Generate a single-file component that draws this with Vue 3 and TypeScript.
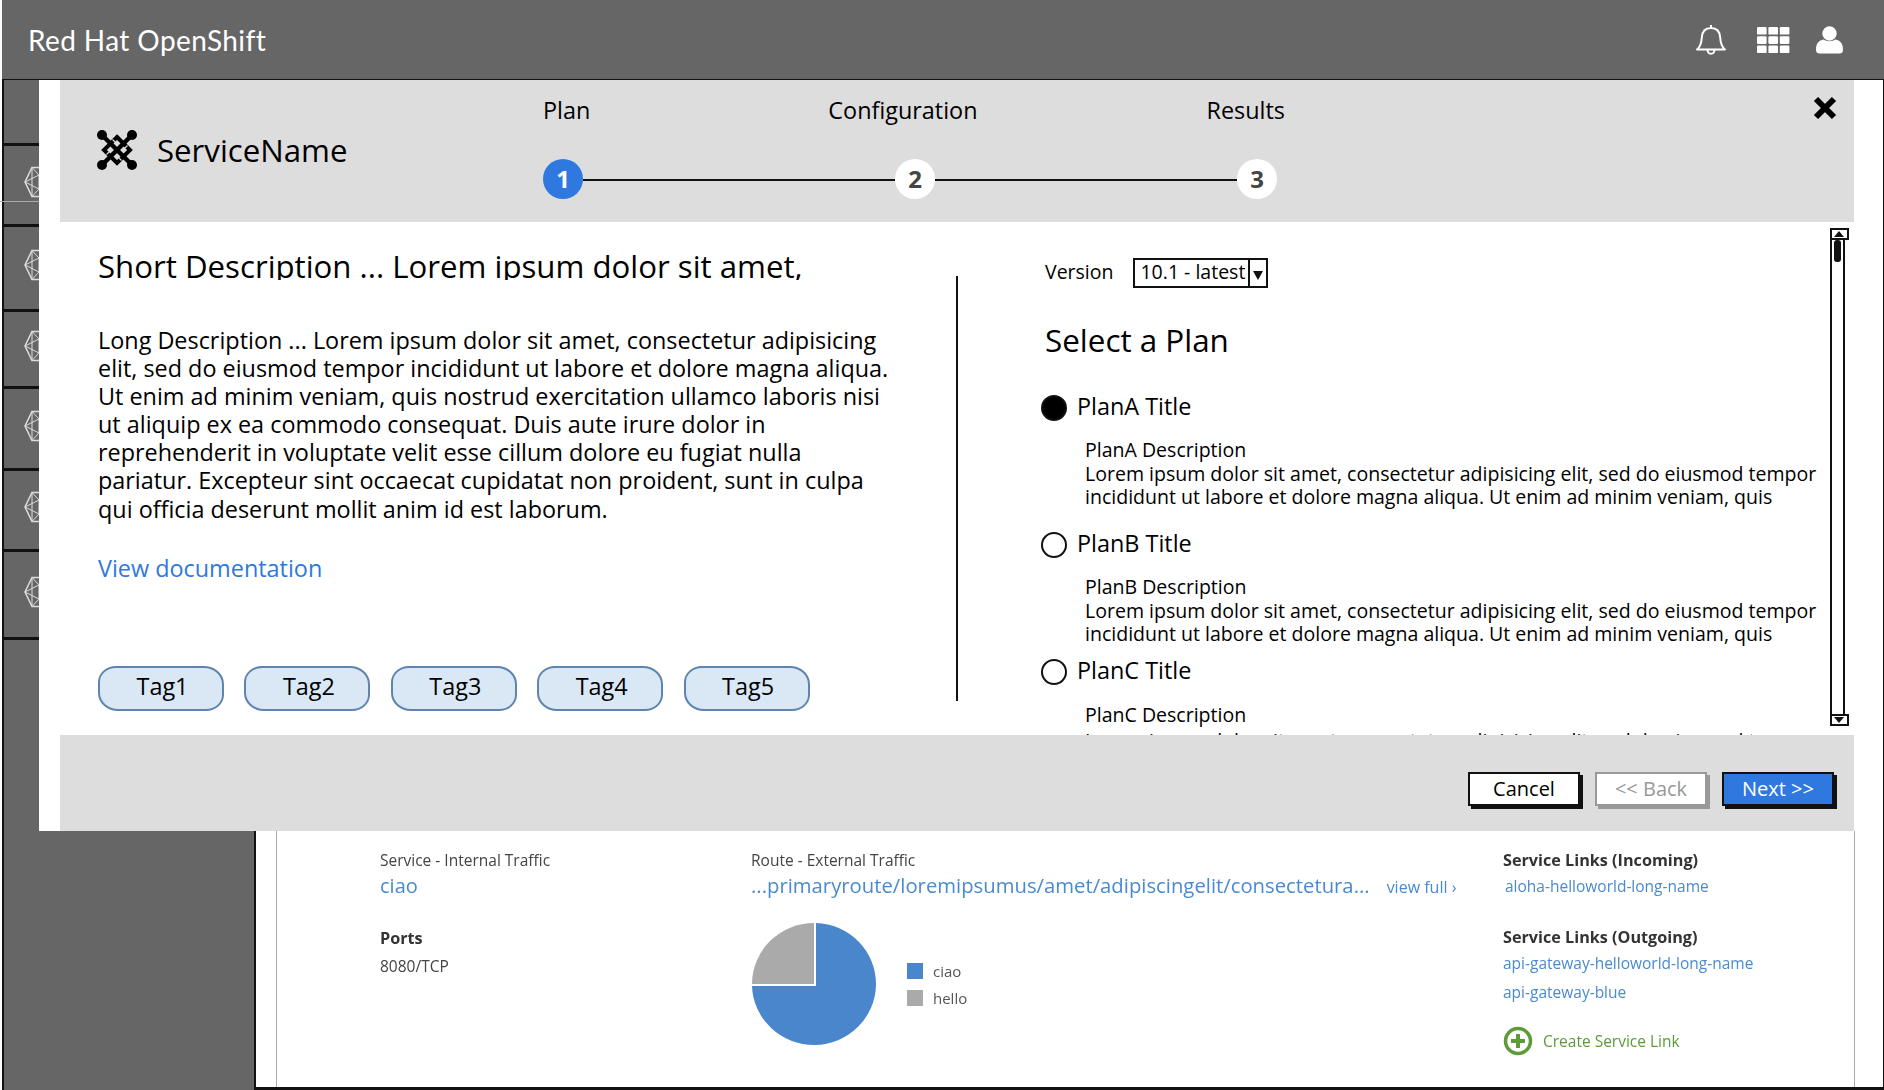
<template>
  <div class="page">
    <header class="topbar">
      <span class="brand">Red Hat OpenShift</span>
      <div class="top-icons">
        <svg width="32" height="34" viewBox="0 0 32 34" fill="none" stroke="#fff" stroke-width="2">
          <path d="M2 26.5c4-3 4.500-7 4.800-12C7.200 8.500 10.500 5 16 5s8.800 3.500 9.200 9.500c.3 5 .8 9 4.800 12z" stroke-linejoin="round" />
          <path d="M16 5V2M12.500 27c.5 5 6.500 5 7 0" />
        </svg>
        <svg class="grid-icon" width="33" height="26" viewBox="0 0 33 26" fill="#fff">
          <template v-for="y in [0, 9.300, 18.600]" :key="y">
            <rect v-for="x in [0, 11.400, 22.800]" :key="x" :x="x" :y="y" width="9.600" height="7.600" rx="1.200" />
          </template>
        </svg>
        <svg width="27" height="28" viewBox="0 0 27 28" fill="#fff">
          <circle cx="13.500" cy="7.500" r="7.200" />
          <path d="M0 24c0-7 3-9.500 7.500-10.500 3.500 2.300 8.500 2.300 12 0C24 14.500 27 17 27 24c0 2.500-1.500 3.500-3.500 3.500h-20C1.500 27.500 0 26.500 0 24z" />
        </svg>
      </div>
    </header>

    <div class="shell">
      <aside class="sidebar">
        <div v-for="(h, i) in rowHeights" :key="i" class="side-row" :style="{ height: h + 'px' }">
          <svg v-if="i > 0" class="hex" width="30" height="32" viewBox="0 0 30 32" fill="none" stroke="#ddd" stroke-width="1">
            <path d="M8 1.500h14L29 16l-7 14.500H8L1 16z" stroke-width="1.500" />
            <path d="M8 1.500L15 9l7-7.500M1 16l14-7 14 7M1 16l14 7 14-7M8 30.500L15 23l7 7.500M15 9v14M8 1.500V30.500M22 1.500V30.500" />
          </svg>
        </div>
      </aside>

      <main class="main">
        <div class="panel">
          <section class="col">
            <div class="label">Service - Internal Traffic</div>
            <a class="link big">ciao</a>
            <div class="head ports">Ports</div>
            <div class="label port">8080/TCP</div>
          </section>
          <section class="col">
            <div class="label">Route - External Traffic</div>
            <div class="route">
              <a class="link route-link">...primaryroute/loremipsumus/amet/adipiscingelit/consectetura...</a>
              <a class="link view-full">view full ›</a>
            </div>
            <div class="chart">
              <svg width="124" height="122" viewBox="0 0 124 124" preserveAspectRatio="none">
                <path d="M64 64V0A62 62 0 1 1 0 64z" fill="#4a86cc" />
                <path d="M62 62V0A62 62 0 0 0 0 62z" fill="#aaa" />
              </svg>
              <ul class="legend">
                <li><i class="swatch blue"></i>ciao</li>
                <li><i class="swatch gray"></i>hello</li>
              </ul>
            </div>
          </section>
          <section class="col">
            <div class="head">Service Links (Incoming)</div>
            <a class="link small incoming">aloha-helloworld-long-name</a>
            <div class="head outgoing">Service Links (Outgoing)</div>
            <a class="link small out1">api-gateway-helloworld-long-name</a>
            <a class="link small out2">api-gateway-blue</a>
            <div class="create">
              <svg width="30" height="30" viewBox="0 0 30 30" fill="none" stroke="#5d9b38">
                <circle cx="15" cy="15" r="12.500" stroke-width="3.500" />
                <path d="M15 8v14M8 15h14" stroke-width="4" />
              </svg>
              Create Service Link
            </div>
          </section>
        </div>
      </main>
    </div>

    <div class="modal">
      <div class="modal-head">
        <div class="service">
          <svg width="40" height="40" viewBox="0 0 40 40" fill="none" stroke="#000">
            <path d="M5 5l30 30M35 5L5 35" stroke-width="4.500" />
            <path d="M20 7l13 13-13 13L7 20z" stroke-width="4" />
            <path d="M15.500 9.500l4 4M30.500 15.500l-4 4M24.500 30.500l-4-4M9.500 24.500l4-4" stroke="#ddd" stroke-width="1.200" />
            <g fill="#000" stroke="none">
              <circle cx="5" cy="5" r="5" /><circle cx="35" cy="5" r="5" /><circle cx="5" cy="35" r="5" /><circle cx="35" cy="35" r="5" />
            </g>
          </svg>
          <span>ServiceName</span>
        </div>
        <div class="steps">
          <div class="step-labels">
            <span v-for="s in steps" :key="s.n" class="step-label">{{ s.label }}</span>
          </div>
          <div class="track">
            <template v-for="(s, i) in steps" :key="s.n">
              <span class="dot" :class="{ active: i === 0 }">{{ s.n }}</span>
              <span v-if="i < steps.length - 1" class="bar"></span>
            </template>
          </div>
        </div>
        <svg class="close" width="24" height="24" viewBox="0 0 24 24" stroke="#000" stroke-width="6">
          <path d="M3 3l18 18M21 3L3 21" />
        </svg>
      </div>

      <div class="modal-body">
        <div class="left">
          <h1 class="short">Short Description ... Lorem ipsum dolor sit amet,</h1>
          <p class="long">
            <template v-for="l in longLines" :key="l">{{ l }}<br /></template>
          </p>
          <a class="doc">View documentation</a>
          <div class="tags">
            <span v-for="t in tags" :key="t" class="tag">{{ t }}</span>
          </div>
        </div>
        <div class="divider"></div>
        <div class="right">
          <div class="version">
            <span>Version</span>
            <div class="select">
              <span class="select-value">10.1 - latest</span>
              <span class="select-arrow"></span>
            </div>
          </div>
          <h2 class="select-plan">Select a Plan</h2>
          <div v-for="(p, i) in plans" :key="p" class="plan">
            <div class="plan-title">
              <span class="radio" :class="{ on: i === 0 }"></span>
              <span class="plan-name">{{ p }} Title</span>
            </div>
            <div class="plan-desc">
              {{ p }} Description<br />
              Lorem ipsum dolor sit amet, consectetur adipisicing elit, sed do eiusmod tempor<br />
              incididunt ut labore et dolore magna aliqua. Ut enim ad minim veniam, quis
            </div>
          </div>
        </div>
        <div class="scrollbar">
          <span class="arrow up"></span>
          <span class="thumb"></span>
          <span class="arrow down"></span>
        </div>
      </div>

      <div class="modal-foot">
        <button class="btn">Cancel</button>
        <button class="btn disabled">&lt;&lt; Back</button>
        <button class="btn primary">Next &gt;&gt;</button>
      </div>
    </div>
  </div>
</template>

<script setup lang="ts">
const rowHeights: number[] = [66, 81, 85, 77, 82, 81, 88]

const steps = [
  { n: 1, label: "Plan" },
  { n: 2, label: "Configuration" },
  { n: 3, label: "Results" },
]

const longLines: string[] = [
  "Long Description ... Lorem ipsum dolor sit amet, consectetur adipisicing",
  "elit, sed do eiusmod tempor incididunt ut labore et dolore magna aliqua.",
  "Ut enim ad minim veniam, quis nostrud exercitation ullamco laboris nisi",
  "ut aliquip ex ea commodo consequat. Duis aute irure dolor in",
  "reprehenderit in voluptate velit esse cillum dolore eu fugiat nulla",
  "pariatur. Excepteur sint occaecat cupidatat non proident, sunt in culpa",
  "qui officia deserunt mollit anim id est laborum.",
]

const tags: string[] = ["Tag1", "Tag2", "Tag3", "Tag4", "Tag5"]
const plans: string[] = ["PlanA", "PlanB", "PlanC"]
</script>

<style>
html, body {
  margin: 0;
  background: #fff;
}
</style>

<style scoped>
.page {
  position: relative;
  width: 1884px;
  height: 1090px;
  overflow: hidden;
  background: #fff;
  font-family: "Open Sans", "Noto Sans", sans-serif;
  color: #000;
}

.topbar {
  margin-left: 2px;
  height: 79px;
  border-bottom: 1px solid #111;
  background: #666;
  display: flex;
  align-items: center;
  justify-content: space-between;
  padding: 0 41px 0 26px;
}
.brand {
  font-family: Lato, "Open Sans", sans-serif;
  font-size: 28px;
  color: #fff;
  letter-spacing: 0.4px;
}
.top-icons {
  display: flex;
  align-items: center;
  gap: 26px;
}
.grid-icon {
  margin-left: 4px;
}

.shell {
  display: flex;
  height: 1010px;
  margin-left: 2px;
}
.sidebar {
  width: 250px;
  background: #666;
  border-left: 2px solid #111;
  border-right: 2px solid #111;
  flex: none;
}
.side-row {
  position: relative;
  box-sizing: border-box;
  border-bottom: 3px solid #111;
  display: flex;
  align-items: center;
  padding: 0 0 6px 20px;
}
.side-row:first-child::after {
  content: "";
  position: absolute;
  left: -4px;
  top: 121px;
  width: 40px;
  height: 1px;
  background: #aaa;
}
.main {
  flex: 1;
  box-sizing: border-box;
  border-right: 1px solid #111;
  border-bottom: 3px solid #111;
  padding: 0 28px 0 20px;
}
.panel {
  height: 100%;
  box-sizing: border-box;
  border-left: 1px solid #aaa;
  border-right: 1px solid #aaa;
  padding: 770px 0 0 103px;
  display: grid;
  grid-template-columns: 371px 752px 1fr;
  filter: blur(0.35px);
}
.col {
  display: flex;
  flex-direction: column;
  align-items: flex-start;
}
.label {
  font-size: 15.500px;
  line-height: 20px;
  color: #444;
}
.port {
  margin-top: 8px;
}
.head {
  font-size: 16.200px;
  line-height: 20px;
  font-weight: 700;
  color: #333;
}
.ports {
  margin-top: 28px;
}
.link {
  color: #4a8ad0;
}
.big {
  font-size: 20px;
  line-height: 28px;
  margin-top: 2px;
}
.route {
  display: flex;
  align-items: baseline;
  gap: 17px;
  margin-top: 1px;
  line-height: 28px;
  white-space: nowrap;
}
.route-link {
  font-size: 20.300px;
}
.view-full {
  font-size: 16px;
}
.chart {
  display: flex;
  align-items: center;
  gap: 31px;
  margin: 22px 0 0 1px;
}
.legend {
  list-style: none;
  margin: 0;
  padding: 0;
  font-size: 15px;
  color: #555;
}
.legend li {
  display: flex;
  align-items: center;
  gap: 10px;
  height: 27px;
}
.swatch {
  width: 16px;
  height: 16px;
}
.blue {
  background: #4a86cc;
}
.gray {
  background: #aaa;
}
.small {
  font-size: 15.500px;
  line-height: 22px;
}
.incoming {
  margin: 5px 0 0 2px;
}
.outgoing {
  margin-top: 30px;
}
.out1 {
  margin-top: 5px;
}
.out2 {
  margin-top: 7px;
}
.create {
  display: flex;
  align-items: center;
  gap: 10px;
  margin-top: 23px;
  font-size: 15.500px;
  color: #5d9b38;
}

.modal {
  position: absolute;
  left: 39px;
  top: 80px;
  width: 1841px;
  height: 751px;
  box-sizing: border-box;
  background: #fff;
  padding: 0 26px 0 21px;
  display: flex;
  flex-direction: column;
}
.modal-head {
  position: relative;
  flex: none;
  height: 142px;
  background: #ddd;
  display: flex;
}
.service {
  display: flex;
  align-items: center;
  gap: 20px;
  width: 483px;
  padding: 0 0 0 37px;
  box-sizing: border-box;
  height: 120px;
  margin-top: 10px;
  font-size: 31.200px;
}
.steps {
  padding-top: 14px;
}
.step-labels {
  position: relative;
  display: flex;
  height: 33px;
  font-size: 23.400px;
  line-height: 33px;
}
.step-label:nth-child(2) {
  margin-left: 238px;
}
.step-label:nth-child(3) {
  margin-left: 229px;
}
.track {
  display: flex;
  align-items: center;
  margin-top: 32px;
}
.dot {
  width: 40px;
  height: 40px;
  flex: none;
  border-radius: 50%;
  background: #fff;
  color: #444;
  font-size: 24px;
  font-weight: 700;
  line-height: 40px;
  text-align: center;
}
.dot.active {
  background: #2f78e0;
  color: #fff;
}
.bar {
  width: 312px;
  height: 2px;
  margin-top: 2px;
  background: #111;
}
.bar:nth-child(4) {
  width: 302px;
}
.close {
  position: absolute;
  right: 17px;
  top: 16px;
}

.modal-body {
  flex: 1;
  min-height: 0;
  display: flex;
  overflow: hidden;
}
.left {
  width: 896px;
  flex: none;
  box-sizing: border-box;
  padding-left: 38px;
}
.short {
  margin: 22px 0 0;
  height: 36px;
  overflow: hidden;
  font-size: 31.200px;
  line-height: 44px;
  font-weight: 400;
  white-space: nowrap;
}
.long {
  margin: 46px 0 0;
  font-size: 23.400px;
  line-height: 28.100px;
  white-space: nowrap;
}
.doc {
  display: block;
  margin-top: 31px;
  font-size: 23.400px;
  line-height: 28px;
  color: #2f78e0;
}
.tags {
  display: flex;
  gap: 20.400px;
  margin-top: 84px;
}
.tag {
  width: 126px;
  height: 45px;
  box-sizing: border-box;
  padding: 0 0 9px 3px;
  border: 2px solid #5f84ad;
  border-radius: 18px 20px 18px 20px / 16px 18px 16px 18px;
  background: #dae8f6;
  font-size: 23.400px;
  line-height: 36px;
  text-align: center;
}
.divider {
  width: 2px;
  height: 425px;
  margin-top: 54px;
  flex: none;
  background: #111;
}
.right {
  width: 872px;
  flex: none;
  box-sizing: border-box;
  padding: 36px 0 0 87px;
  white-space: nowrap;
}
.version {
  display: flex;
  align-items: center;
  gap: 20px;
  font-size: 19.500px;
  height: 30px;
}
.version > span {
  margin-top: -3px;
}
.select {
  width: 135px;
  height: 30px;
  box-sizing: border-box;
  border: 2px solid #111;
  display: flex;
}
.select-value {
  flex: 1;
  padding-left: 5px;
  line-height: 23px;
  font-size: 19.500px;
}
.select-arrow {
  position: relative;
  width: 16px;
  border-left: 2px solid #111;
}
.select-arrow::after {
  content: "";
  position: absolute;
  left: 3px;
  top: 11px;
  border: 5px solid transparent;
  border-top: 9px solid #111;
  border-bottom: 0;
}
.select-plan {
  margin: 30px 0 0;
  font-size: 31.400px;
  line-height: 44px;
  font-weight: 400;
}
.plan {
  margin-top: 19.500px;
}
.select-plan + .plan {
  margin-top: 29px;
}
.plan:last-child {
  margin-top: 9.500px;
}
.plan:last-child .plan-desc {
  line-height: 25.500px;
}
.plan-title {
  display: flex;
  align-items: center;
  gap: 9px;
  height: 34px;
  margin-left: -4px;
  font-size: 23.400px;
}
.plan-name {
  margin: -4px 0 0 1px;
}
.radio {
  width: 26px;
  height: 26px;
  box-sizing: border-box;
  border: 2px solid #111;
  border-radius: 50%;
}
.radio.on {
  background: #000;
}
.plan-desc {
  margin: 13px 0 0 40px;
  font-size: 19.550px;
  line-height: 23.500px;
}
.scrollbar {
  position: relative;
  width: 15px;
  height: 498px;
  margin-top: 6px;
  flex: none;
  box-sizing: border-box;
  border: 2px solid #111;
  border-radius: 2px;
}
.arrow {
  position: absolute;
  left: -2px;
  width: 15px;
  height: 8px;
  background: #fff;
  border: 2px solid #111;
}
.arrow.up {
  top: -2px;
}
.arrow.down {
  bottom: -2px;
}
.arrow::after {
  content: "";
  position: absolute;
  left: 2px;
  top: 1px;
  border: 5px solid transparent;
  border-top: 0;
  border-bottom: 6px solid #111;
}
.arrow.down::after {
  border-bottom: 0;
  border-top: 6px solid #111;
}
.thumb {
  position: absolute;
  left: 2px;
  top: 10px;
  width: 7px;
  height: 22px;
  border-radius: 3px;
  background: #111;
}

.modal-foot {
  flex: none;
  height: 96px;
  background: #ddd;
  display: flex;
  justify-content: flex-end;
  gap: 15px;
  padding: 37px 20px 0 0;
  box-sizing: border-box;
}
.btn {
  width: 112px;
  height: 34px;
  box-sizing: border-box;
  border: 2px solid #111;
  box-shadow: 3px 3px 0 #111;
  background: #fff;
  color: #000;
  font-family: inherit;
  font-size: 20px;
  line-height: 28px;
  padding: 0;
}
.btn.disabled {
  border-color: #999;
  box-shadow: 3px 3px 0 #999;
  color: #999;
}
.btn.primary {
  background: #2f78e0;
  color: #fff;
}
</style>
